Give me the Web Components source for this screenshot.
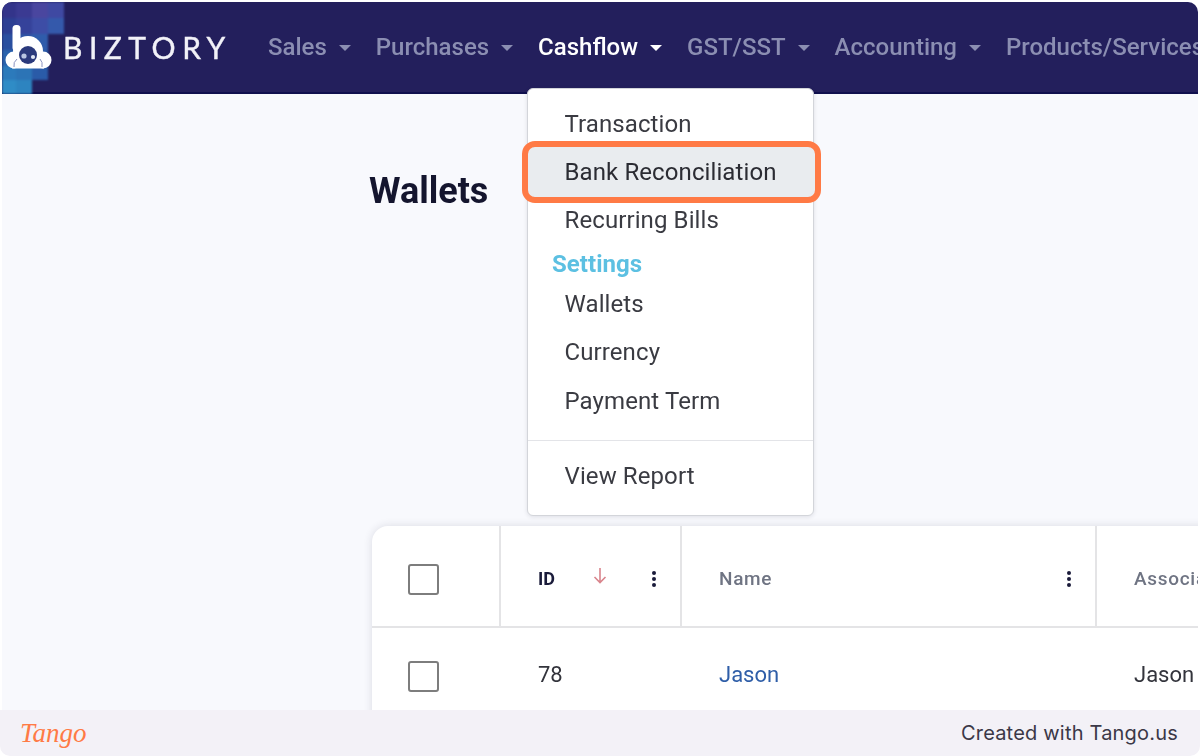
<!DOCTYPE html>
<html lang="en">
<head>
<meta charset="utf-8">
<title>Wallets</title>
<style>
  html, body { margin: 0; height: 100%; background: #fff; }
  body { font-family: Roboto, "Liberation Sans", sans-serif; overflow: hidden; }
</style>
</head>
<body>
<biz-app>
  <biz-navbar slot="nav">
    <nav-item>Sales</nav-item>
    <nav-item>Purchases</nav-item>
    <nav-item active>Cashflow</nav-item>
    <nav-item>GST/SST</nav-item>
    <nav-item>Accounting</nav-item>
    <nav-item>Products/Services</nav-item>
  </biz-navbar>
  <wallets-page slot="main"></wallets-page>
  <biz-menu slot="overlay">
    <menu-item>Transaction</menu-item>
    <menu-item focused>Bank Reconciliation</menu-item>
    <menu-item>Recurring Bills</menu-item>
    <menu-heading>Settings</menu-heading>
    <menu-item>Wallets</menu-item>
    <menu-item>Currency</menu-item>
    <menu-item style="top: 1px">Payment Term</menu-item>
    <menu-divider></menu-divider>
    <menu-item>View Report</menu-item>
  </biz-menu>
  <tango-footer slot="footer"></tango-footer>
</biz-app>

<script>
class BizApp extends HTMLElement {
  constructor() {
    super();
    this.attachShadow({ mode: 'open' });
    this.shadowRoot.innerHTML = `
      <style>
      :host { display: flex; flex-direction: column; width: 1200px; height: 756px; position: relative; overflow: hidden; }
      .shot {
          flex: 1;
          min-height: 0;
          margin: 2px 2px 0;
          display: flex;
          flex-direction: column;
          background: #f8f9fd;
          border-radius: 10px 10px 0 0;
          overflow: hidden;
      }
      .overlay { position: absolute; left: 527px; top: 88px; }
      </style>
      <div class="shot">
        <slot name="nav"></slot>
        <slot name="main"></slot>
      </div>
      <div class="overlay"><slot name="overlay"></slot></div>
      <slot name="footer"></slot>`;
  }
}

class BizNavbar extends HTMLElement {
  constructor() {
    super();
    this.attachShadow({ mode: 'open' });
    this.shadowRoot.innerHTML = `
      <style>
      :host { display: block; flex: none; height: 92px; background: #231f5c; box-shadow: inset 0 -2px 0 #10104e; position: relative; overflow: hidden; }
      .mosaic { position: absolute; left: 0; top: 0; filter: blur(1px); }
      .bar { position: relative; display: flex; align-items: center; height: 90px; }
      .logo { flex: none; width: 61px; height: 90px; filter: blur(.5px); }
      .logo svg { display: block; }
      .brand {
          flex: none;
          width: 205px;
          font: 400 30px/1 Lato, "Liberation Sans", sans-serif;
          letter-spacing: 6.5px;
          color: #f2f2f8;
          -webkit-text-stroke: 0.4px #f2f2f8;
          filter: blur(.5px);
      }
      .items { display: flex; gap: 25px; align-items: center; white-space: nowrap; }
      </style>
      <svg class="mosaic" width="64" height="92" viewBox="0 0 64 92">
        <rect x="0" y="0" width="14" height="16" fill="#33348a"/>
        <rect x="14" y="0" width="16" height="16" fill="#3b3a92"/>
        <rect x="30" y="0" width="16" height="16" fill="#4a469f"/>
        <rect x="46" y="0" width="16" height="16" fill="#3f49a2"/>
        <rect x="0" y="16" width="14" height="16" fill="#2c3f93"/>
        <rect x="14" y="16" width="16" height="16" fill="#35429a"/>
        <rect x="30" y="16" width="16" height="16" fill="#3d4da6"/>
        <rect x="46" y="16" width="16" height="16" fill="#3459ab"/>
        <rect x="0" y="32" width="14" height="16" fill="#2a4f9f"/>
        <rect x="14" y="32" width="16" height="16" fill="#2f55a5"/>
        <rect x="30" y="32" width="16" height="16" fill="#2f5cab"/>
        <rect x="0" y="48" width="14" height="16" fill="#2a63ad"/>
        <rect x="14" y="48" width="16" height="16" fill="#2c67b0"/>
        <rect x="30" y="48" width="16" height="16" fill="#2a5ba8"/>
        <rect x="0" y="64" width="14" height="14" fill="#2c7abb"/>
        <rect x="14" y="64" width="16" height="14" fill="#2c74b6"/>
        <rect x="30" y="64" width="16" height="14" fill="#2a5ba8"/>
        <rect x="0" y="78" width="14" height="14" fill="#2f8cc6"/>
        <rect x="14" y="78" width="16" height="14" fill="#2d84c0"/>
      </svg>
      <div class="bar">
        <div class="logo">
          <svg width="61" height="90" viewBox="0 0 61 90">
            <rect x="10.5" y="23" width="8" height="26" rx="3.5" fill="#fff"/>
            <circle cx="26" cy="49" r="15" fill="#fff"/>
            <circle cx="12" cy="58" r="8.5" fill="#fff"/>
            <circle cx="41" cy="58" r="8.5" fill="#fff"/>
            <rect x="10" y="56" width="32" height="10.5" fill="#fff"/>
            <circle cx="26" cy="53" r="9" fill="#2b3a7c"/>
            <circle cx="22" cy="54" r="2.6" fill="#b9c6e2"/>
            <circle cx="31" cy="55" r="2.1" fill="#dfe6f4"/>
            <path d="M12 65q-1-5 3-8M40 65q1-5-2-8" stroke="#8a93c0" stroke-width="1" fill="none"/>
          </svg>
        </div>
        <div class="brand">BIZTORY</div>
        <div class="items"><slot></slot></div>
      </div>`;
  }
}

class NavItem extends HTMLElement {
  constructor() {
    super();
    this.attachShadow({ mode: 'open' });
    this.shadowRoot.innerHTML = `
      <style>
      :host { display: inline-flex; align-items: center; gap: 12px; font: 500 24px/1 Roboto, sans-serif; color: #8b8eb2; filter: blur(.45px); }
      :host([active]) { color: #fff; }
      i { width: 0; height: 0; margin-top: 2px; border-style: solid; border-width: 6px 6px 0; border-color: currentColor transparent transparent; }
      </style>
      <slot></slot><i></i>`;
  }
}

class BizMenu extends HTMLElement {
  constructor() {
    super();
    this.attachShadow({ mode: 'open' });
    this.shadowRoot.innerHTML = `
      <style>
      :host {
          display: block;
          box-sizing: border-box;
          width: 287px;
          height: 428px;
          padding: 11px 0 0;
          background: #fff;
          border: 1px solid #d3d5da;
          border-radius: 6px;
          box-shadow: 0 1px 4px rgba(30, 30, 60, .12);
      }
      </style>
      <slot></slot>`;
  }
}

class MenuItem extends HTMLElement {
  constructor() {
    super();
    this.attachShadow({ mode: 'open' });
    this.shadowRoot.innerHTML = `
      <style>
      :host { display: block; height: 48px; padding-left: 36.5px; font: 400 24px/48px Roboto, sans-serif; letter-spacing: 0.1px; color: #3a3b42; position: relative; white-space: nowrap; }
      :host([focused]) { color: #2b2c33; }
      .ring { display: none; position: absolute; left: -6px; right: -8px; top: -7px; height: 62px; box-sizing: border-box; background: #e9ecef; border: 6px solid #ff7a45; border-radius: 13px; }
      :host([focused]) .ring { display: block; }
      span { position: relative; display: inline-block; filter: blur(.45px); }
      </style>
      <div class="ring"></div><span><slot></slot></span>`;
  }
}

class MenuHeading extends HTMLElement {
  constructor() {
    super();
    this.attachShadow({ mode: 'open' });
    this.shadowRoot.innerHTML = `
      <style>
      :host { display: block; height: 33px; margin-top: 3px; padding-left: 24px; font: 700 24px/35px Roboto, sans-serif; letter-spacing: 0.05px; color: #5cc0e2; filter: blur(.45px); }
      </style>
      <slot></slot>`;
  }
}

class MenuDivider extends HTMLElement {
  constructor() {
    super();
    this.attachShadow({ mode: 'open' });
    this.shadowRoot.innerHTML = `
      <style>
      :host { display: block; height: 1px; margin: 16px 0 11px; background: #e3e4e8; }
      </style>`;
  }
}

class WalletsPage extends HTMLElement {
  constructor() {
    super();
    this.attachShadow({ mode: 'open' });
    this.shadowRoot.innerHTML = `
      <style>
      :host { display: block; flex: 1; min-height: 0; padding: 0 0 0 367px; overflow: hidden; }
      h1 { margin: 0; padding-top: 75px; height: 432px; box-sizing: border-box; font: 700 36px/44px Roboto, sans-serif; color: #14152e; }
      h1 span { filter: blur(.45px); display: inline-block; }
      .card { width: 1100px; height: 300px; margin-left: 3px; background: #fff; border-radius: 16px 0 0 0; box-shadow: 0 0 8px rgba(40, 40, 70, .14); }
      .row { display: grid; grid-template-columns: 127px 181px 415px 1fr; }
      .head { height: 102px; border-bottom: 2px solid #e4e4e6; box-sizing: border-box; }
      .cell { display: flex; align-items: center; box-sizing: border-box; min-width: 0; }
      .cell > span { filter: blur(.4px); }
      .head .cell { border-left: 2px solid #e4e4e6; padding-top: 5px; }
      .head .cell:first-child { border-left: 0; }
      .head .box { margin-top: 2px; }
      .box { width: 31px; height: 31px; margin-left: 36px; box-sizing: border-box; border: 2px solid #7d7d7d; border-radius: 3px; }
      .id { font: 700 18px/1 Roboto, sans-serif; color: #1a1b3a; margin-left: 37px; }
      .arrow { margin-left: 37px; margin-top: -6px; }
      .dots { margin-left: auto; margin-right: 23px; }
      .th { font: 500 19px/1 Roboto, sans-serif; letter-spacing: 0.7px; color: #6f7483; margin-left: 37px; margin-top: -1px; white-space: nowrap; }
      .body { height: 82px; }
      .body .cell { padding-top: 12px; font: 400 22px/1 Roboto, sans-serif; color: #33343c; }
      .body .num { margin-left: 39px; }
      .body .link { margin-left: 39px; color: #2f5ea8; }
      .body .plain { margin-left: 39px; white-space: nowrap; }
      .body .box { margin-top: 2px; }
      </style>
      <h1><span>Wallets</span></h1>
      <div class="card">
        <div class="row head">
          <div class="cell"><div class="box"></div></div>
          <div class="cell">
            <span class="id">ID</span>
            <svg class="arrow" width="16" height="18" viewBox="0 0 16 18"><path d="M8 1v14M2.5 10L8 15.5 13.5 10" fill="none" stroke="#d9848c" stroke-width="1.6"/></svg>
            <svg class="dots" width="6" height="18" viewBox="0 0 6 18"><circle cx="3" cy="3" r="2" fill="#1a1b3a"/><circle cx="3" cy="9" r="2" fill="#1a1b3a"/><circle cx="3" cy="15" r="2" fill="#1a1b3a"/></svg>
          </div>
          <div class="cell">
            <span class="th">Name</span>
            <svg class="dots" width="6" height="18" viewBox="0 0 6 18"><circle cx="3" cy="3" r="2" fill="#1a1b3a"/><circle cx="3" cy="9" r="2" fill="#1a1b3a"/><circle cx="3" cy="15" r="2" fill="#1a1b3a"/></svg>
          </div>
          <div class="cell"><span class="th">Associated</span></div>
        </div>
        <div class="row body">
          <div class="cell"><div class="box"></div></div>
          <div class="cell"><span class="num">78</span></div>
          <div class="cell"><span class="link">Jason</span></div>
          <div class="cell"><span class="plain">Jason</span></div>
        </div>
      </div>`;
  }
}

class TangoFooter extends HTMLElement {
  constructor() {
    super();
    this.attachShadow({ mode: 'open' });
    this.shadowRoot.innerHTML = `
      <style>
      :host { display: flex; flex: none; align-items: center; justify-content: space-between; height: 46px; padding: 0 22px 0 20px; background: #f3f1f7; border-radius: 0 0 10px 10px; position: relative; }
      .mark { font: italic 400 27px/1 "Liberation Serif", serif; color: #ff7a45; }
      .by { font: 400 20px/1 Inter, "Liberation Sans", sans-serif; letter-spacing: 0.2px; color: #3b3847; }
      </style>
      <span class="mark">Tango</span>
      <span class="by">Created with Tango.us</span>`;
  }
}

customElements.define('biz-app', BizApp);
customElements.define('biz-navbar', BizNavbar);
customElements.define('nav-item', NavItem);
customElements.define('biz-menu', BizMenu);
customElements.define('menu-item', MenuItem);
customElements.define('menu-heading', MenuHeading);
customElements.define('menu-divider', MenuDivider);
customElements.define('wallets-page', WalletsPage);
customElements.define('tango-footer', TangoFooter);
</script>
</body>
</html>
